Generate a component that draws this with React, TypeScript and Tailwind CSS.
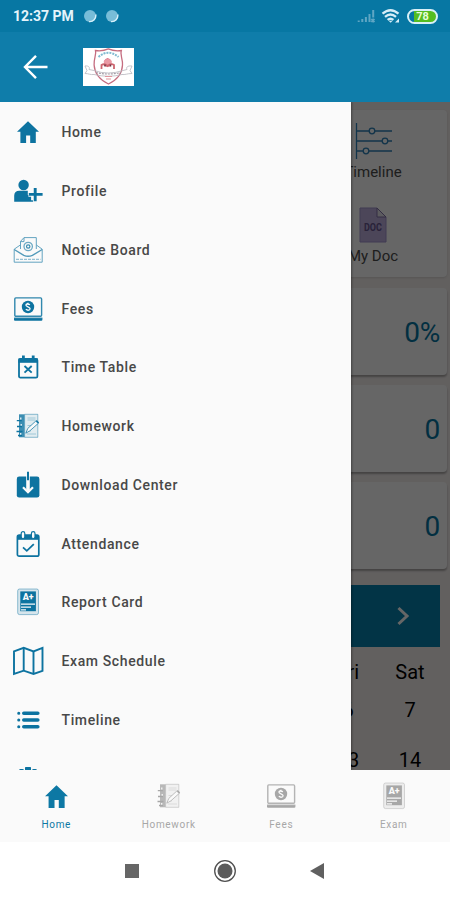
import { ReactNode } from "react";
import clsx from "clsx";

type IconProps = {
  className?: string;
};

type MenuItem = {
  label: string;
  icon: ReactNode;
};

const HomeIcon = ({ className }: IconProps) => (
  <svg viewBox="0 0 24 24" className={className} fill="currentColor">
    <path d="M12 1.2 1 11.7h3.4V23h5.7v-7.6h4.1V23h5.6V11.7H23z" />
  </svg>
);

const ProfileIcon = () => (
  <svg viewBox="0 0 30 24" className="h-6 w-[30px]" fill="currentColor">
    <circle cx="10.6" cy="6" r="5.2" />
    <path d="M1.2 22.7v-6.2c0-3 2-4.8 5-4.8h8.6v4.2h3.3v5.4h2v1.4z" />
    <path
      d="M22.2 8.6v13.6M15.4 15.4h14.2"
      stroke="#fafafa"
      strokeWidth="4.6"
    />
    <path d="M22.2 9v13.2M15.8 15.4h13.8" stroke="currentColor" strokeWidth="2.9" />
  </svg>
);

const NoticeIcon = () => (
  <svg viewBox="0 0 30 28" className="h-7 w-[30px]" fill="none" stroke="currentColor">
    <g strokeWidth="0.9" opacity="0.7">
      <path d="M7.5 13V5.4L11 1.6h12.3V13" />
      <path d="M7.5 5.6H11V1.8" />
      <path d="M7.3 9 1.2 13.2v13h28v-13L23.4 9" />
      <path d="m1.2 13.5 9.6 5.8q4.3 2 8.6 0l9.8-5.8" strokeWidth="1.4" />
      <path d="M3 23.4h24.5" strokeWidth="1.4" strokeDasharray="3 1" opacity="0.6" />
    </g>
    <circle cx="15.2" cy="10.5" r="4.2" strokeWidth="1.3" opacity="0.6" />
    <circle cx="15.2" cy="10.5" r="1.7" strokeWidth="1.2" opacity="0.8" />
  </svg>
);

const FeesIcon = () => (
  <svg viewBox="0 0 30 26" className="h-[26px] w-[30px]" fill="none">
    <rect x="1.8" y="1.9" width="26.8" height="18.4" rx="1" stroke="currentColor" strokeWidth="1.4" strokeOpacity="0.85" />
    <path d="M1 22.7h28.4v1a1 1 0 0 1-1 1H2a1 1 0 0 1-1-1z" fill="currentColor" />
    <path d="M1 21.6h28.4v1.3H1z" fill="currentColor" />
    <circle cx="15" cy="11" r="6.2" fill="currentColor" />
    <path
      d="M17 8.7q-3.8-1.6-4.1.4c0 1.9 4.3 1.6 4.2 3.6-.2 2.1-3 1.6-4.3.6M15 6.8v1.4m0 5.4v1.4"
      stroke="#fafafa"
      strokeWidth="1.3"
    />
  </svg>
);

const TimeTableIcon = () => (
  <svg viewBox="0 0 24 26" className="h-[26px] w-6" fill="none" stroke="currentColor">
    <rect x="3" y="5" width="18.4" height="18.6" rx="1.4" strokeWidth="1.8" />
    <path d="M2.4 6.6h19.4" strokeWidth="4.4" />
    <path d="M7.4 1.4v3.6M17.2 1.4v3.6" strokeWidth="2.8" />
    <path d="m8.500 12 7.2 6.6m0-6.600-7.200 6.600" strokeWidth="1.9" />
  </svg>
);

const HomeworkIcon = () => (
  <svg viewBox="0 0 24 26" className="h-[26px] w-6" fill="none" stroke="currentColor">
    <path d="M3 1.3h5.4v23H3z" fill="currentColor" stroke="none" opacity="0.8" />
    <path d="M8.600 1.300h13.200v23H8.600z" fill="currentColor" fillOpacity="0.1" strokeWidth="0.9" strokeOpacity="0.5" />
    <path d="M11.5 5h8M11.5 7h8M11.5 12.5h5M11 18h4M11 21h9" strokeWidth="0.9" opacity="0.35" />
    <path d="M4.8 4.6v2M5.2 11v2M4.7 20v2" stroke="#fafafa" strokeWidth="1.2" />
    <path d="M.8 7.7h5M1 13.5h5M.5 18.5h6M2 22.5h4" strokeWidth="1.3" />
    <path d="m9.8 20.2 2-4.8 8-7.4 2.3 2.5-8.2 7.3z" fill="#fafafa" strokeWidth="0.9" strokeOpacity="0.8" />
    <path d="m19.8 8 1-1 2.3 2.4-1 1z" fill="currentColor" stroke="none" />
  </svg>
);

const DownloadIcon = () => (
  <svg viewBox="0 0 24 28" className="h-7 w-6" fill="none">
    <rect x=".8" y="5.6" width="22.6" height="21" rx="2.4" fill="currentColor" />
    <path d="M12 5v15.2" stroke="#fafafa" strokeWidth="3.6" />
    <path d="m7 16.200 5 5 5-5" stroke="#fafafa" strokeWidth="2.200" />
    <path d="M12 .8v8.400" stroke="currentColor" strokeWidth="2" />
  </svg>
);

const AttendanceIcon = () => (
  <svg viewBox="0 0 24 28" className="h-7 w-6" fill="none" stroke="currentColor">
    <rect x="1.4" y="5.2" width="21.4" height="21" rx="1.8" strokeWidth="1.7" />
    <path d="M1.2 7.4h21.6" strokeWidth="4.8" />
    <rect x="5.2" y="1.7" width="3.6" height="6.8" rx="1.8" fill="#fafafa" strokeWidth="1.2" />
    <rect x="15.4" y="1.7" width="3.6" height="6.8" rx="1.8" fill="#fafafa" strokeWidth="1.2" />
    <path d="m7 17.3 3.8 3.5 7-6.7" strokeWidth="1.8" />
  </svg>
);

const ReportIcon = () => (
  <svg viewBox="0 0 24 28" className="h-7 w-6">
    <rect x="1.7" y="1" width="20.8" height="25.6" rx="1.8" fill="currentColor" fillOpacity="0.15" stroke="currentColor" strokeOpacity="0.55" strokeWidth="0.8" />
    <rect x="4.300" y="3.4" width="15.600" height="19.800" fill="currentColor" />
    <text x="12.2" y="12.3" textAnchor="middle" fill="#fafafa" className="font-['Roboto',sans-serif] text-[9px] font-black">
      A+
    </text>
    <path d="M5 16.2h14M5 19.200h10M5 21.800h5" stroke="#fafafa" strokeWidth="1.2" />
  </svg>
);

const MapIcon = () => (
  <svg viewBox="0 0 32 30" className="h-[30px] w-8" fill="none" stroke="currentColor" strokeWidth="1.9">
    <path d="m2 5.4 9.7-3.6 9.8 3.6 9-3.6v23L21.5 28l-9.8-3.3L2 28z" />
    <path d="M11.7 2v22.7M21.5 5.4V28" />
  </svg>
);

const ListIcon = () => (
  <svg viewBox="0 0 24 22" className="h-[22px] w-6" stroke="currentColor" strokeLinecap="round">
    <path d="M7.8 4.2h14M7.8 11h14M7.8 17.8h14" strokeWidth="3.6" />
    <path d="M2.7 4.2h.1M2.7 11h.1M2.7 17.8h.1" strokeWidth="3" />
  </svg>
);

// only the top of this one shows above the bottom bar
const DocumentsIcon = () => (
  <svg viewBox="0 0 24 24" className="h-6 w-6" fill="currentColor">
    <rect x="9" y="0" width="6" height="3.200" rx="0.600" />
    <rect x="3" y="2" width="5" height="19" rx="1.600" />
    <rect x="16" y="2" width="5" height="19" rx="1.600" />
    <rect x="5" y="5" width="14" height="17" />
  </svg>
);

const menuItems: MenuItem[] = [
  { label: "Home", icon: <HomeIcon className="h-6 w-6" /> },
  { label: "Profile", icon: <ProfileIcon /> },
  { label: "Notice Board", icon: <NoticeIcon /> },
  { label: "Fees", icon: <FeesIcon /> },
  { label: "Time Table", icon: <TimeTableIcon /> },
  { label: "Homework", icon: <HomeworkIcon /> },
  { label: "Download Center", icon: <DownloadIcon /> },
  { label: "Attendance", icon: <AttendanceIcon /> },
  { label: "Report Card", icon: <ReportIcon /> },
  { label: "Exam Schedule", icon: <MapIcon /> },
  { label: "Timeline", icon: <ListIcon /> },
  { label: "", icon: <DocumentsIcon /> },
];

const tabs: MenuItem[] = [
  { label: "Home", icon: <HomeIcon className="h-[25px] w-[25px]" /> },
  { label: "Homework", icon: <HomeworkIcon /> },
  { label: "Fees", icon: <FeesIcon /> },
  { label: "Exam", icon: <ReportIcon /> },
];

const calendar = [
  ["6", "7"],
  ["13", "14"],
];

function StatusBar() {
  return (
    <div className="flex h-8 items-center justify-between bg-[#0777a3] pr-3 pl-[13px] text-white">
      <div className="flex items-center">
        <span className="w-[62px] text-sm font-bold whitespace-nowrap text-[#e4f4fb]">12:37 PM</span>
        {[0, 1].map((i) => (
          <svg key={i} viewBox="0 0 14 14" className="ml-2 h-3.5 w-3.5">
            <circle cx="7" cy="7" r="6" fill="#78bdd8" />
            <path d="M12.7 5.5A6 6 0 0 1 6 12.6" fill="none" stroke="#d7f0fa" strokeWidth="1.4" />
          </svg>
        ))}
      </div>
      <div className="flex items-center">
        <svg viewBox="0 0 18 14" className="h-3.5 w-[18px]" stroke="#5fa6c4" strokeWidth="2">
          <path d="M1.7 13v-1.6M5.3 13v-3M8.9 13V8M12.5 13V5M16.2 8.5V1M14.4 10l3 3m0-3-3 3" />
        </svg>
        <svg viewBox="0 0 20 16" className="ml-1.5 h-4 w-5" fill="none" stroke="#d5edf7" strokeWidth="2.300">
          <path d="M1.5 5.7q8-7 16 0M4 8.900q5.5-4.8 11 0M6.6 11.9q2.9-2.4 5.8 0" />
          <path d="m7.6 12.8 2 2 2-2z" fill="#d5edf7" stroke="none" />
          <path d="M14 14.5h4v-4z" fill="#d5edf7" stroke="none" />
        </svg>
        <div className="ml-1.5 flex h-[15px] w-[31px] items-center justify-center rounded-full border-2 border-[#d9f0f7] bg-[linear-gradient(90deg,#0777a3_20%,#55bd21_20%)] text-[11px] leading-none font-bold text-[#e6ffd7]">
          78
        </div>
      </div>
    </div>
  );
}

function AppBar() {
  return (
    <header className="flex h-[70px] items-center bg-[#0f7daa] pl-[23px]">
      <svg viewBox="0 0 26 26" className="h-[26px] w-[26px]" fill="none" stroke="#fff" strokeWidth="2.4">
        <path d="M24.5 13H2.2M13 1.9 2 13l11 11.1" />
      </svg>
      <svg viewBox="0 0 51 38" className="ml-[34px] h-[38px] w-[51px] bg-white" fill="none">
        <path
          d="M12.5 2.5q7 1 12.8-1.6 6 2.6 13 1.6c-1.6 4 1.6 8 1.2 14.5q-.5 12.5-14 19-13.6-6.5-14.4-19c-.4-6.5 2.5-10.500 1.400-14.500z"
          stroke="#c56d80"
          strokeWidth="1.3"
        />
        <path d="M15.500 9q9.500-8.500 20 0" stroke="#80bbd1" strokeWidth="2" strokeDasharray="2 1" />
        <path d="M20.500 13.500q4-7 8.500 0z" fill="#dc7188" />
        <circle cx="24.800" cy="15" r="4" fill="#e99aa5" />
        <path d="M18.500 21v-4q3-2 6 1 3.500-3 6.500-1v4" stroke="#cd6670" strokeWidth="1.800" />
        <path d="M22 16.500v2M27.500 16.500v2" stroke="#6d3545" strokeWidth="1.500" />
        <path d="M2 18c4-.5 5 1.500 4 3.500l5 1q14 5 29 0l4-1c-1-2 0-4 5-3.500l-2 4.500 2 3c-5 0-7 1.500-10 1q-13.500 3.500-28 0c-4 .5-5-1-9-1l2-3z" stroke="#bdbdc4" strokeWidth="0.900" />
        <path d="M13 24.500q12 3 25 0" stroke="#a7a0aa" strokeWidth="1.200" strokeDasharray="2 1" />
        <path d="M22 28.500h7M23 31h5" stroke="#e0939c" strokeWidth="1.200" />
      </svg>
    </header>
  );
}

function Dashboard() {
  return (
    <div className="flex h-full flex-col overflow-hidden bg-[#f5f0ee] pt-2">
      <section className="mr-[3px] flex h-[167px] shrink-0 flex-col items-end rounded-sm bg-white pr-[38px] text-[15px] leading-5 text-[#4c4c4c] shadow">
        <div className="flex w-[72px] flex-col items-center pt-[13px]">
          <svg viewBox="0 0 37 36" className="h-9 w-[37px]" fill="none" stroke="#2f83b9" strokeWidth="1.3">
            <path d="M1.500 0v36M1.500 8H37M1.500 18H37M1.500 28H37" />
            <g fill="#fff">
              <circle cx="17" cy="8" r="2.800" />
              <circle cx="30" cy="18" r="2.800" />
              <circle cx="11" cy="28" r="2.800" />
            </g>
          </svg>
          <span className="mt-[3px]">Timeline</span>
        </div>
        <div className="flex w-[72px] flex-col items-center pt-[25px]">
          <svg viewBox="0 0 28 36" className="h-9 w-7">
            <path d="M1 1h17l9 9v25H1z" fill="#bdb0df" stroke="#a193cc" />
            <path d="M18 1v9h9z" fill="#e6e3ed" stroke="#8070a8" />
            <text x="14" y="24" textAnchor="middle" textLength="18" lengthAdjust="spacingAndGlyphs" fill="#67558f" className="text-[10px] font-bold">
              DOC
            </text>
          </svg>
          <span className="mt-[3px]">My Doc</span>
        </div>
      </section>
      {["0%", "0", "0"].map((value, i) => (
        <section
          key={i}
          className={clsx(
            "mr-[3px] flex h-[87px] shrink-0 items-center justify-end rounded-sm bg-white pt-0.5 pr-[7px] text-[28px] text-[#0777a3] shadow-[0_2px_2px_rgba(0,0,0,0.3)]",
            i === 0 ? "mt-[11px]" : "mt-2.5"
          )}
        >
          <span className="tracking-[-0.3px]">{value}</span>
        </section>
      ))}
      <div className="mt-4 mr-2.5 flex h-[62px] shrink-0 items-center justify-end bg-[#0683ae] pr-[30px]">
        <svg viewBox="0 0 14 20" className="h-5 w-3.5" fill="none" stroke="#fff" strokeWidth="3">
          <path d="m2.500 2 8.500 8-8.500 8" />
        </svg>
      </div>
      <div className="mt-[9px] mr-[9px] grid shrink-0 grid-cols-[62px_62px] justify-end text-center text-xl leading-8 text-black">
        <span>Fri</span>
        <span>Sat</span>
      </div>
      {calendar.map((week) => (
        <div key={week[0]} className="mt-[6px] mr-[9px] mb-3 grid shrink-0 grid-cols-[62px_62px] justify-end text-center text-xl leading-8 text-black">
          {week.map((day) => (
            <span key={day}>{day}</span>
          ))}
        </div>
      ))}
    </div>
  );
}

function Drawer() {
  return (
    <nav className="absolute inset-y-0 left-0 w-[351px] overflow-hidden bg-[#fafafa] pt-[1px] shadow-[1px_0_2px_rgba(0,0,0,0.35)]">
      {menuItems.map((item, index) => (
        <div key={index} className="flex h-[58.75px] items-center">
          <div className="flex w-14 shrink-0 justify-center text-[#0d73a0]">{item.icon}</div>
          <span className="pl-[5.500px] text-sm font-medium tracking-[0.620px] text-[#484848]">{item.label}</span>
        </div>
      ))}
    </nav>
  );
}

export default function App() {
  return (
    <div className="flex h-[900px] w-[450px] flex-col overflow-hidden bg-white font-['Roboto',sans-serif]">
      <StatusBar />
      <AppBar />
      <main className="relative h-[668px] shrink-0 overflow-hidden">
        <Dashboard />
        <div className="absolute inset-0 bg-black/60" />
        <Drawer />
      </main>
      <div className="grid h-[72px] shrink-0 grid-cols-4 bg-[#fafafa]">
        {tabs.map((tab, index) => (
          <div
            key={tab.label}
            className={clsx("flex flex-col items-center pt-3", index === 0 ? "text-[#0d78a4]" : "text-[#a7a7a7]")}
          >
            <div className="flex h-7 items-center">{tab.icon}</div>
            <span className="mt-2 text-[10px] leading-[14px] tracking-[0.700px]">{tab.label}</span>
          </div>
        ))}
      </div>
      <div className="flex h-[58px] items-center pl-[125px]">
        <div className="h-3.5 w-3.5 bg-[#666]" />
        <svg viewBox="0 0 24 24" className="ml-[74px] h-6 w-6">
          <circle cx="12" cy="12" r="10.300" fill="none" stroke="#505050" strokeWidth="1.300" />
          <circle cx="12" cy="12" r="7.500" fill="#5c5c5c" />
        </svg>
        <svg viewBox="0 0 16 18" className="ml-[72px] h-[18px] w-4">
          <path d="M15 1v16L1 9z" fill="#606060" />
        </svg>
      </div>
    </div>
  );
}
